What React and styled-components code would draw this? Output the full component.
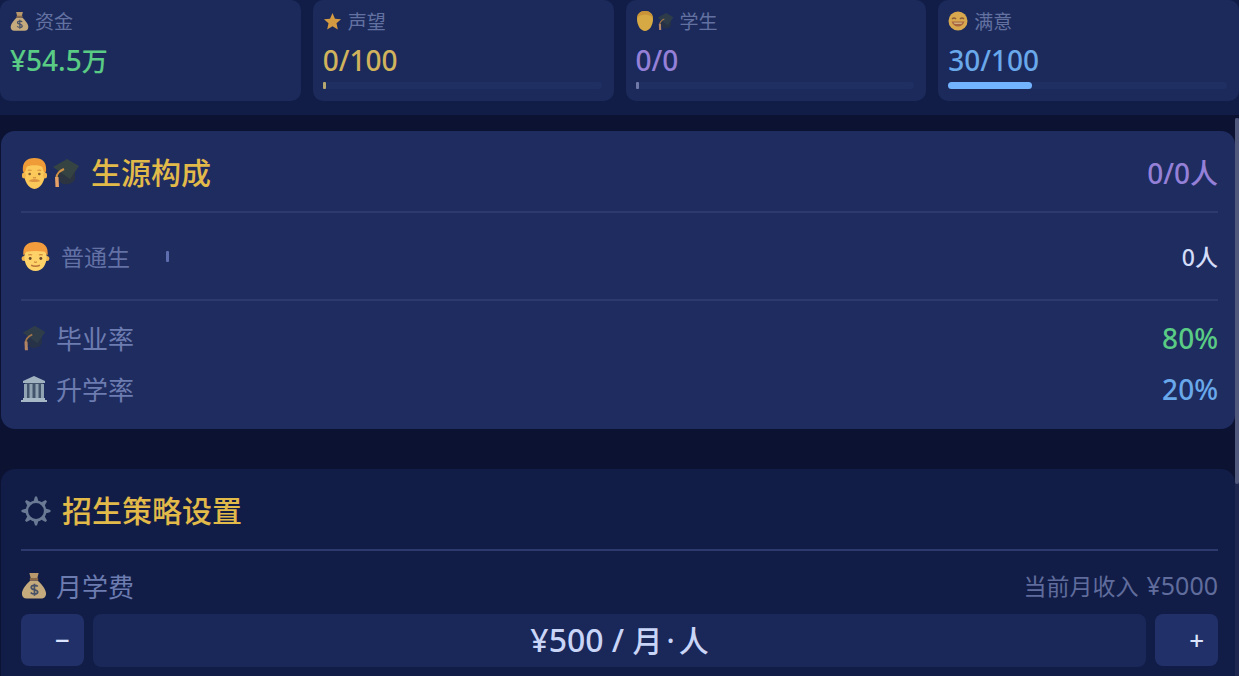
import React from "react";
import styled, { createGlobalStyle } from "styled-components";

const GlobalStyle = createGlobalStyle`
  *, *::before, *::after { box-sizing: border-box; }
  body {
    margin: 0;
    background: #0c1231;
    color: #d3dcf8;
    font-family: "Noto Sans", "Noto Sans CJK SC", sans-serif;
    font-weight: 500;
  }
  h2, p, dl, dd, dt { margin: 0; font-weight: inherit; }
`;

const Page = styled.div`
  display: flex;
  flex-direction: column;
  min-height: 100vh;
`;

const StatBar = styled.header`
  display: grid;
  grid-template-columns: repeat(4, 1fr);
  gap: 12px;
  padding-bottom: 14px;
  background: #111d47;
`;

const StatCard = styled.section`
  padding: 8px 12px 12px 10px;
  border-radius: 10px;
  background: #1b2a5b;
`;

const StatLabel = styled.div`
  display: flex;
  align-items: center;
  gap: 6px;
  height: 26px;
  font-size: 19px;
  font-weight: 400;
  color: #6371a1;
`;

const StatValue = styled.div`
  margin-top: 6px;
  font-size: 28px;
  line-height: 40px;
  color: ${(p) => p.$color};
`;

const Unit = styled.span`
  font-size: 26px;
`;

const Meter = styled.div`
  height: 7px;
  margin-top: 2px;
  border-radius: 4px;
  background: #202f62;
`;

const MeterFill = styled.div`
  height: 100%;
  min-width: 3px;
  border-radius: ${(p) => (p.$empty ? "1px" : "4px")};
  background: ${(p) => p.$color};
`;

const Main = styled.main`
  display: flex;
  flex: 1;
  padding-top: 3px;
`;

const Panels = styled.div`
  display: flex;
  flex: 1;
  flex-direction: column;
  gap: 40px;
  padding: 13px 0 0 1px;
`;

const ScrollTrack = styled.div`
  width: 4px;
  background: #1d2750;
`;

const ScrollThumb = styled.div`
  height: 366px;
  border-radius: 3px;
  background: #50587c;
`;

const Panel = styled.section`
  padding: 0 17px 15px 20px;
  border-radius: 14px;
  background: #1e2c60;
`;

const SettingsPanel = styled(Panel)`
  flex: 1;
  padding-bottom: 8px;
  border-radius: 14px 14px 0 0;
  background: #111d47;
`;

const PanelHeader = styled.div`
  display: flex;
  align-items: center;
  justify-content: space-between;
  height: 82px;
  padding-top: 4px;
  border-bottom: 2px solid #2c3a6d;
`;

const Title = styled.h2`
  display: flex;
  align-items: center;
  gap: 11px;
  font-size: 30px;
  line-height: 44px;
  color: #e2ba4a;
`;

const IconGroup = styled.span`
  display: flex;
  align-items: center;
  gap: ${(p) => p.$gap || 4}px;
`;

const Amount = styled.span`
  font-size: 28px;
  line-height: 40px;
  color: ${(p) => p.$color};
`;

const SourceRow = styled.div`
  display: flex;
  align-items: center;
  gap: 11px;
  height: 88px;
  border-bottom: 2px solid #2c3a6d;
`;

const SourceName = styled.span`
  width: 94px;
  font-size: 23px;
  font-weight: 400;
  color: #6371a5;
`;

const SourceMeter = styled.div`
  flex: 1;
  height: 11px;
`;

const SourceFill = styled.div`
  width: 3px;
  height: 100%;
  border-radius: 1px;
  background: #5d6db0;
`;

const SourceCount = styled.span`
  font-size: 23px;
  color: #d3dcf8;
`;

const Rates = styled.dl`
  padding-top: 11px;
`;

const Row = styled.div`
  display: flex;
  align-items: center;
  justify-content: space-between;
  height: 51px;
`;

const FeeRow = styled(Row)`
  height: 63px;
  padding-top: 6px;
`;

const Label = styled.dt`
  display: flex;
  align-items: center;
  gap: 9px;
  font-size: 26px;
  font-weight: 400;
  color: #6d7cb0;
`;

const Income = styled.span`
  display: flex;
  align-items: baseline;
  gap: 8px;
  font-size: 23px;
  line-height: 36px;
  font-weight: 400;
  color: #606c9c;
`;

const IncomeValue = styled.span`
  font-size: 25px;
`;

const Stepper = styled.div`
  display: flex;
  gap: 9px;
`;

const StepButton = styled.button`
  width: 63px;
  height: 52px;
  padding: 0 14px 0 0;
  border: 0;
  border-radius: 8px;
  background: #213069;
  color: #dce5ff;
  font: inherit;
  font-size: 26px;
  line-height: 52px;
  text-align: right;
  cursor: pointer;
`;

const FeeValue = styled.output`
  flex: 1;
  border-radius: 8px;
  background: #192759;
  color: #c9d5f7;
  font-size: 32px;
  line-height: 52px;
  text-align: center;
`;

const FeeUnit = styled.span`
  font-size: 30px;
`;

const Dot = styled.span`
  padding: 0 4px;
`;

const Icon = styled.svg`
  display: block;
  flex: none;
  opacity: ${(p) => (p.$dim ? 0.75 : 1)};
`;

const MoneyBag = ({ size }) => (
  <Icon width={size} height={size} viewBox="0 0 28 28" aria-hidden="true">
    <path d="M9 0h10l-1.500 6h-7z" fill="#b9996b" />
    <path d="M10 8h8c3 3 9 9 9 14 0 4-3 5.500-5 5.500H6c-3 0-5-2-5-5.500 0-5 6-11 9-14z" fill="#c5aa7d" />
    <path d="M9.500 5.500h9v2.500h-9z" fill="#8b6848" />
    <path d="M18 14.500c-1-1.500-7-2-7 1 0 3.500 7 1.500 7 5 0 3-6 2.500-7.500.5M14.500 11.500v13" fill="none" stroke="#465066" strokeWidth="1.800" />
  </Icon>
);

const Star = () => (
  <Icon width="19" height="19" viewBox="0 0 20 20" aria-hidden="true">
    <path d="M10 1l2.600 6 6.400.600-4.800 4.300 1.400 6.500L10 15l-5.600 3.400 1.400-6.500L1 7.600 7.400 7z" fill="#d49a42" />
  </Icon>
);

const Man = () => (
  <Icon width="27" height="33" viewBox="0 0 28 34" aria-hidden="true">
    <path d="M14 3c8 0 11 6 11 13 0 9-5 17-11 17S3 25 3 16C3 9 6 3 14 3z" fill="#fbc95a" />
    <ellipse cx="3" cy="19" rx="2" ry="3" fill="#f2b64c" />
    <ellipse cx="25" cy="19" rx="2" ry="3" fill="#f2b64c" />
    <path d="M2 15C1 5 6 1 14 1s13 4 12 14l-2 1-2-6c-5-2-11-2-16 0l-2 6z" fill="#ef9b38" />
    <circle cx="9" cy="17.500" r="1.400" fill="#8a6030" />
    <circle cx="19" cy="17.500" r="1.400" fill="#8a6030" />
    <path d="M7 14q2-1 4 0M17 14q2-1 4 0" fill="none" stroke="#d99542" strokeWidth="1.200" />
    <path d="M8 25c2-3 10-3 12 0-3 1-9 1-12 0z" fill="#dc9440" />
    <path d="M12.500 21q1.500 1 3 0" fill="none" stroke="#d6933f" strokeWidth="1.300" />
  </Icon>
);

const MiniHead = () => (
  <Icon width="18" height="20" viewBox="0 0 18 20" aria-hidden="true">
    <path d="M9 0c5 0 8 3 8 8 0 7-4 12-8 12S1 15 1 8c0-5 3-8 8-8z" fill="#d6a944" />
    <path d="M1 8c0-5 3-8 8-8s8 3 8 8l-2-3c-4-2-8-2-12 0z" fill="#c99338" />
  </Icon>
);

const Boy = () => (
  <Icon width="29" height="31" viewBox="0 0 29 32" aria-hidden="true">
    <circle cx="2.800" cy="18" r="2.600" fill="#f2b64c" />
    <circle cx="26.200" cy="18" r="2.600" fill="#f2b64c" />
    <path d="M14.500 2C23 2 26 8 26 16c0 8-4 15-11.500 15S3 24 3 16C3 8 6 2 14.500 2z" fill="#fdd269" />
    <path d="M2 15C1 5 6 1 14.500 1S28 5 27 15l-3-4c-6-1-13-1-19 0z" fill="#f29c3d" />
    <circle cx="9" cy="18" r="1.500" fill="#6b482b" />
    <circle cx="20" cy="18" r="1.500" fill="#6b482b" />
    <path d="M7 14.500q2-1 4 0M18 14.500q2-1 4 0M13 21.500q1.500 1 3 0" fill="none" stroke="#d08a3c" strokeWidth="1.200" />
    <path d="M10 25q4.500 2 9 0" fill="none" stroke="#b9743a" strokeWidth="1.600" />
  </Icon>
);

const Cap = ({ width, height, dim }) => (
  <Icon width={width} height={height} viewBox="0 0 28 30" aria-hidden="true" $dim={dim}>
    <path d="M6 13l17-2v10c-2 5-9 7-14 4l-3-5z" fill="#2b3440" />
    <path d="M1 9L15 1l12 7-9 13z" fill="#354343" />
    <path d="M12 11C8 13 4.500 15 4.500 20" fill="none" stroke="#d19043" strokeWidth="2" />
    <path d="M3 19h3.500l.5 10H3.500z" fill="#e6a267" />
  </Icon>
);

const Smile = () => (
  <Icon width="20" height="20" viewBox="0 0 20 20" aria-hidden="true">
    <circle cx="10" cy="10" r="9.500" fill="#d8a84e" />
    <path d="M4 8q2-2 4 0M12 8q2-2 4 0" fill="none" stroke="#8a5c36" strokeWidth="1.400" />
    <path d="M3.500 10.500h13q-2 5-6.500 5t-6.500-5z" fill="#a8643f" />
    <path d="M5.500 11.500h9l-1 1.500h-7z" fill="#cfae7c" />
  </Icon>
);

const Building = () => (
  <Icon width="26" height="28" viewBox="0 0 26 28" aria-hidden="true">
    <path d="M13 1l11 5v2H2V6z" fill="#a1b3c1" />
    <path d="M4 8h18v17H4z" fill="#43556d" />
    <path d="M3 9h3v15H3zM8.500 9h3v15h-3zM14.500 9h3v15h-3zM20 9h3v15h-3z" fill="#8fa3b3" />
    <path d="M2 23h22v2H2zM0 25h26v2H0z" fill="#a6b8c5" />
  </Icon>
);

const Gear = () => (
  <Icon width="30" height="30" viewBox="0 0 30 30" aria-hidden="true">
    <circle cx="15" cy="15" r="9.200" fill="none" stroke="#6b7a94" strokeWidth="2.600" />
    {[0, 45, 90, 135, 180, 225, 270, 315].map((a) => (
      <path key={a} d="M12.500 5.500L14 0.500h2l1.500 5z" fill="#6b7a94" transform={`rotate(${a} 15 15)`} />
    ))}
  </Icon>
);

const stats = [
  { name: "资金", value: "¥54.5", unit: "万", color: "#5acb84", icon: <MoneyBag size={19} /> },
  { name: "声望", value: "0/100", color: "#d1b35d", icon: <Star />, percent: 0, fill: "#b5a970" },
  {
    name: "学生",
    value: "0/0",
    color: "#9580d8",
    icon: (
      <IconGroup $gap={3}>
        <MiniHead />
        <Cap width={17} height={19} dim />
      </IconGroup>
    ),
    percent: 0,
    fill: "#7079a8",
  },
  { name: "满意", value: "30/100", color: "#69a8ea", icon: <Smile />, percent: 30, fill: "#72b4ff" },
];

const rates = [
  { name: "毕业率", value: "80%", color: "#5acb84", icon: <Cap width={26} height={26} dim /> },
  { name: "升学率", value: "20%", color: "#69a8ea", icon: <Building /> },
];

export default function App() {
  const [fee, setFee] = React.useState(500);
  return (
    <Page>
      <GlobalStyle />
      <StatBar>
        {stats.map((s) => (
          <StatCard key={s.name}>
            <StatLabel>{s.icon}{s.name}</StatLabel>
            <StatValue $color={s.color}>{s.value}{s.unit && <Unit>{s.unit}</Unit>}</StatValue>
            {s.percent !== undefined && (
              <Meter role="progressbar" aria-label={s.name} aria-valuenow={s.percent}>
                <MeterFill $color={s.fill} $empty={s.percent === 0} style={{ width: `${s.percent}%` }} />
              </Meter>
            )}
          </StatCard>
        ))}
      </StatBar>
      <Main>
        <Panels>
          <Panel>
            <PanelHeader>
              <Title>
                <IconGroup>
                  <Man />
                  <Cap width={28} height={30} />
                </IconGroup>
                生源构成
              </Title>
              <Amount $color="#9580d8">0/0人</Amount>
            </PanelHeader>
            <SourceRow>
              <Boy />
              <SourceName>普通生</SourceName>
              <SourceMeter role="progressbar" aria-label="普通生" aria-valuenow={0}>
                <SourceFill />
              </SourceMeter>
              <SourceCount>0人</SourceCount>
            </SourceRow>
            <Rates>
              {rates.map((r) => (
                <Row key={r.name}>
                  <Label>{r.icon}{r.name}</Label>
                  <Amount as="dd" $color={r.color}>{r.value}</Amount>
                </Row>
              ))}
            </Rates>
          </Panel>
          <SettingsPanel>
            <PanelHeader>
              <Title><Gear />招生策略设置</Title>
            </PanelHeader>
            <FeeRow>
              <Label as="span" id="fee-label"><MoneyBag size={26} />月学费</Label>
              <Income>当前月收入 <IncomeValue>¥5000</IncomeValue></Income>
            </FeeRow>
            <Stepper role="group" aria-labelledby="fee-label">
              <StepButton type="button" onClick={() => setFee(Math.max(0, fee - 100))}>−</StepButton>
              <FeeValue>¥{fee} / <FeeUnit>月<Dot>·</Dot>人</FeeUnit></FeeValue>
              <StepButton type="button" onClick={() => setFee(fee + 100)}>+</StepButton>
            </Stepper>
          </SettingsPanel>
        </Panels>
        <ScrollTrack><ScrollThumb /></ScrollTrack>
      </Main>
    </Page>
  );
}
